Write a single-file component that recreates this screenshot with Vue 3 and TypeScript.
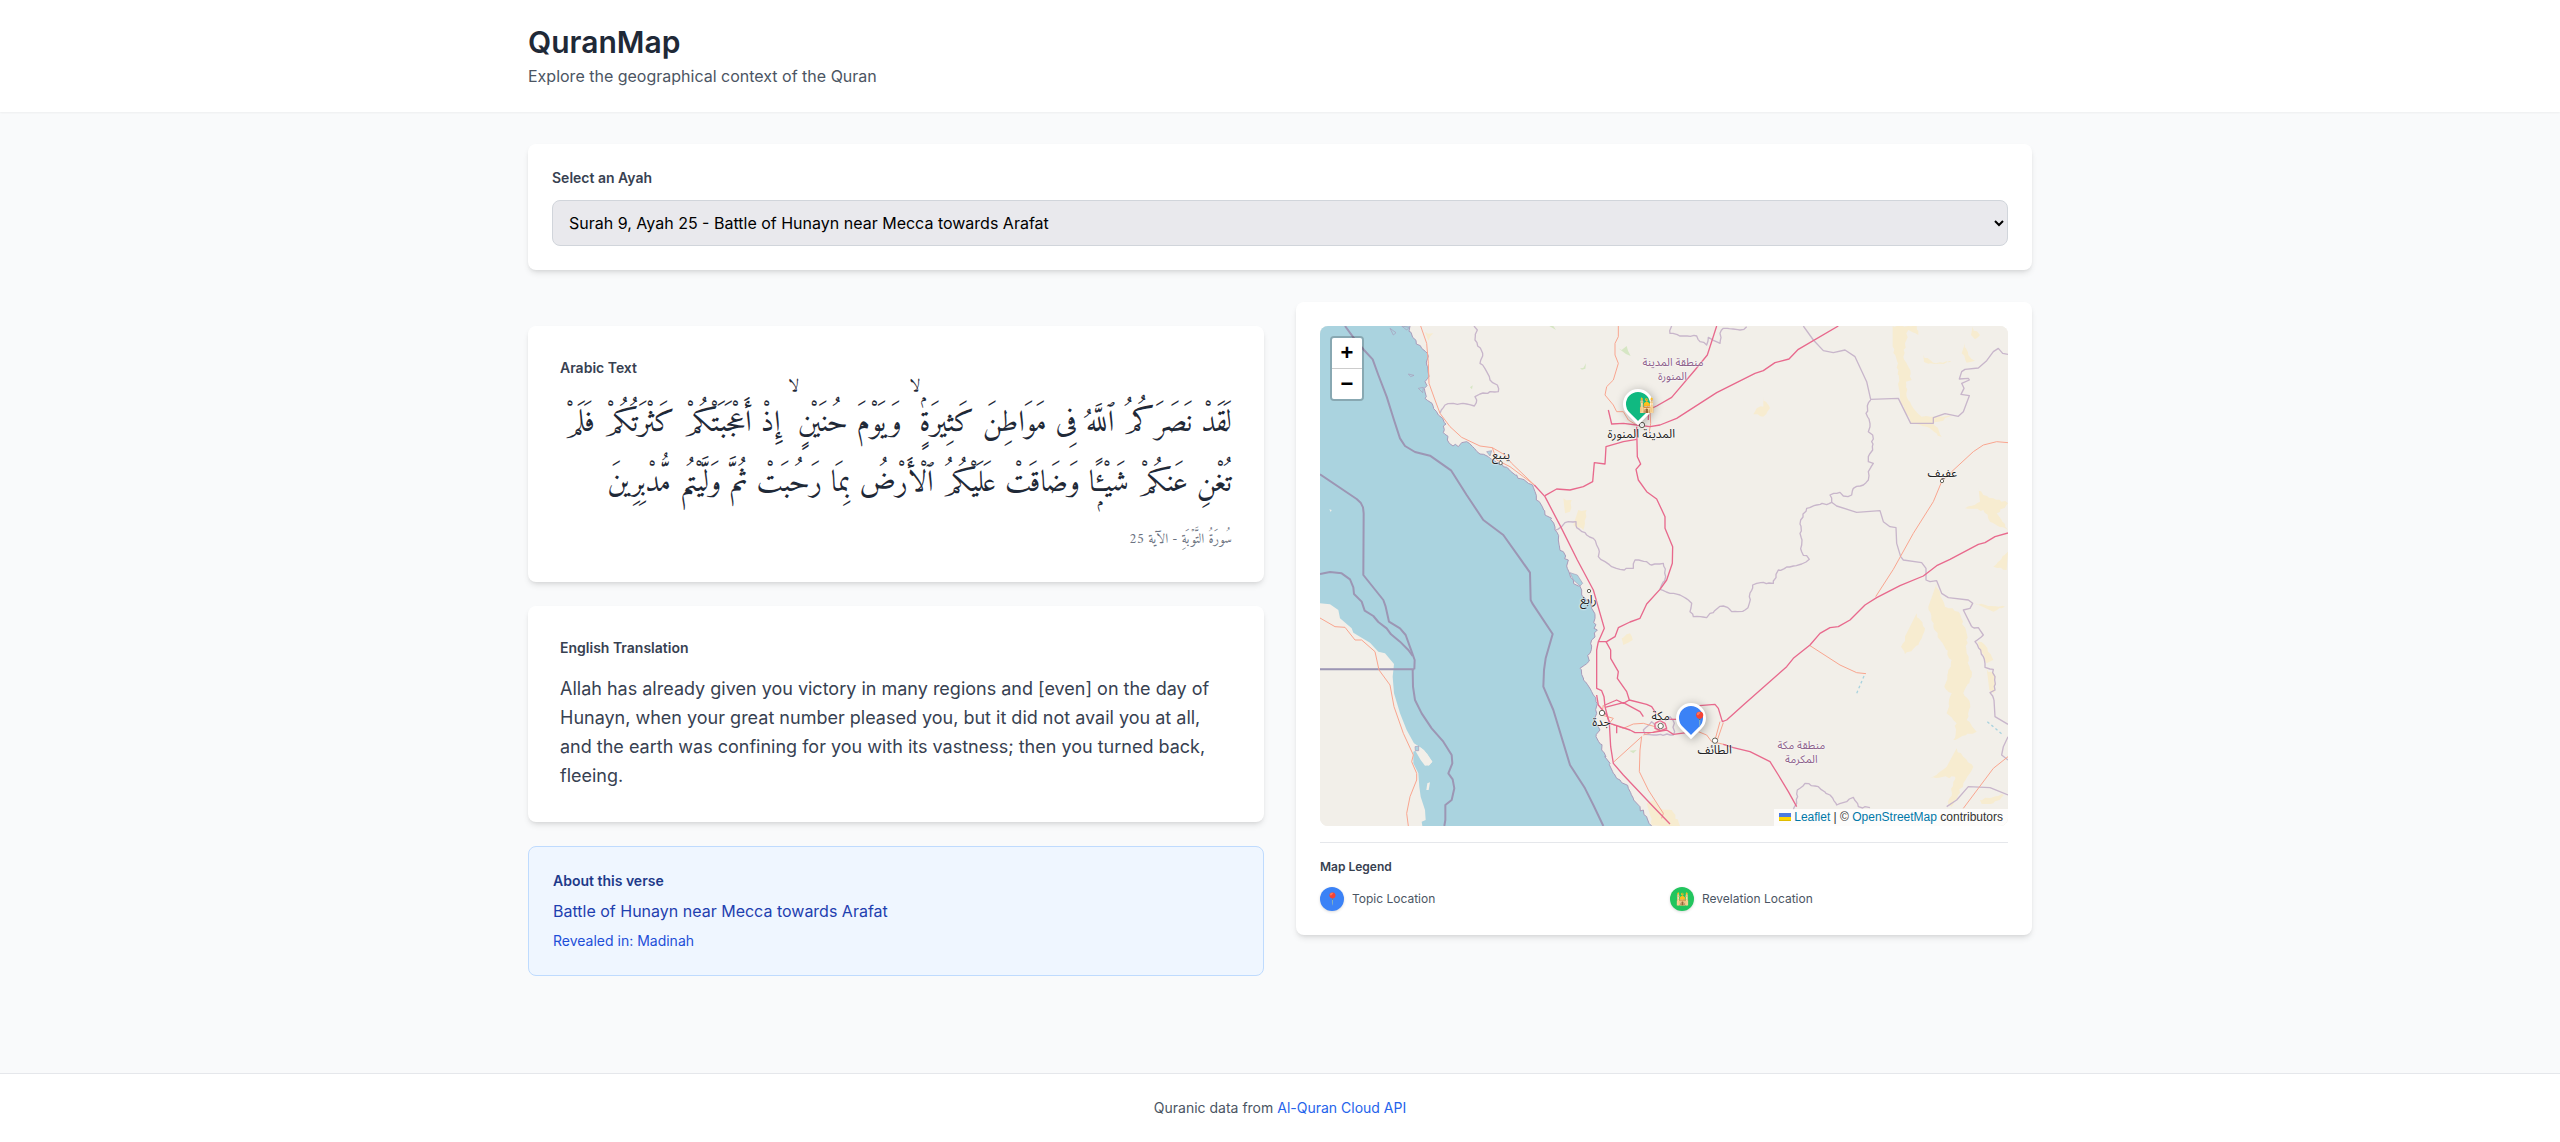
<script setup lang="ts">
import { ref } from 'vue'

type Kind = 'topic' | 'revelation'

interface Place {
  name: string
  x: number
  y: number
  region?: boolean
}

const ayahs = ['Surah 9, Ayah 25 - Battle of Hunayn near Mecca towards Arafat']
const selected = ref(ayahs[0])

/* The map drawing uses its own units: this window of them fills the map. */
const view = { x: 90, y: 78, w: 2064, h: 1500 }

const at = (x: number, y: number) => ({
  left: `${((x - view.x) / view.w) * 100}%`,
  top: `${((y - view.y) / view.h) * 100}%`,
})

/* Breaks every segment into short jittered steps, so coasts and borders look natural. */
function rough(points: string, amp: number): string {
  const pts = points.trim().split(/\s+/).map((p) => p.split(',').map(Number))
  let seed = 7
  const rnd = () => {
    seed = (seed * 16807) % 2147483647
    return seed / 2147483647 - 0.5
  }
  const out: string[] = []
  pts.forEach(([x, y], i) => {
    out.push(`${x},${y}`)
    const next = pts[i + 1]
    if (!next) return
    const [dx, dy] = [next[0] - x, next[1] - y]
    const n = Math.floor(Math.hypot(dx, dy) / 9)
    for (let k = 1; k < n; k++) {
      const t = k / n
      out.push(`${Math.round(x + dx * t + rnd() * amp)},${Math.round(y + dy * t + rnd() * amp)}`)
    }
  })
  return out.join(' ')
}

const eastCoast = rough(
  '360,78 368,112 395,145 412,160 410,195 413,235 403,265 405,295 430,320 445,345 468,372 460,398 478,430 505,440 515,428 530,425 548,440 570,462 600,475 640,500 680,525 715,550 735,575 748,605 765,645 785,655 795,690 805,720 820,755 835,780 832,805 850,840 875,870 890,900 905,925 915,955 912,985 922,990 905,1020 900,1060 885,1095 870,1105 880,1140 905,1175 918,1205 920,1240 915,1270 930,1290 918,1310 935,1350 960,1390 970,1420 990,1440 1015,1465 1030,1495 1050,1520 1070,1550 1085,1578',
  12,
)
const westCoast =
  '397,1578 395,1565 407,1560 405,1530 392,1490 388,1460 385,1420 370,1390 370,1355 376,1352 392,1380 405,1397 418,1396 427,1385 412,1362 395,1345 372,1330 350,1290 330,1240 312,1180 308,1130 312,1092 285,1060 265,1055 240,1028 190,998 185,985 150,955 145,930 120,913 90,910'
const sea = `${eastCoast} ${westCoast} 90,78`

const maritime = [
  '165,78 190,112 222,150 248,178 265,225 290,290 312,360 330,415 345,438 375,456 420,467 483,511 530,585 580,660 640,705 692,778 720,818 722,900 727,910 788,1002 767,1075 762,1110 760,1160 790,1230 840,1395 885,1465 910,1515 940,1578',
  '90,523 200,597 212,608 219,622 221,640 220,825 280,900 287,920 297,965 330,985 347,1005 365,1055 374,1080 373,1108',
  '90,822 120,816 155,820 180,838 190,862 192,882 215,905 224,932 250,948 265,966 290,985 303,1003 330,1025 355,1050 368,1068',
  '368,1108 369,1160 375,1200 395,1240 425,1285 460,1325 485,1365 487,1390 475,1420 488,1438 493,1465 485,1500 466,1515 466,1560 463,1578',
]

const borders = [
  '552,78 562,90 555,120 578,160 570,190 590,215 600,240 622,255 625,275 600,275 570,282 555,290 560,300 553,318 530,312 490,310 465,315 450,340',
  '797,690 815,680 825,668 858,665 860,683 890,705 910,715 928,755 925,770 945,785 965,800 990,808 1030,805 1035,780 1070,785 1085,795 1120,790 1127,830 1110,868 1140,880 1170,885 1195,900 1205,910 1200,935 1210,950 1250,953 1260,940 1300,918 1325,935 1365,930 1378,910 1388,855 1420,847 1450,850 1465,810 1510,798 1535,792 1558,778 1535,755 1535,735 1530,700 1532,660 1550,625 1580,615 1625,607 1620,585 1650,577 1660,588 1685,585 1690,565 1720,555 1735,540 1735,515 1750,490 1735,485 1735,470 1748,450 1748,405 1735,395 1740,380 1728,340 1742,300',
  '1145,78 1140,100 1180,108 1220,108 1230,125 1250,135 1255,112 1290,130 1290,100 1300,85 1350,90 1370,80',
  '1110,1290 1085,1265 1060,1290 1065,1303 1100,1305 1150,1305 1153,1270 1140,1250 1125,1262',
  '1510,1530 1520,1510 1522,1470 1545,1450 1575,1458 1620,1485 1640,1515 1670,1505 1690,1492 1705,1520 1740,1523',
  '2045,980 2065,983 2080,1005 2055,1025 2080,1070 2085,1102 2110,1108 2115,1170 2100,1178 2112,1200',
].map((p) => rough(p, 7))

const straightBorders = [
  '1540,78 1570,120 1600,152 1630,158 1665,150 1695,170 1730,245 1742,298 1825,295 1862,370 1930,370 1930,353 1965,341 2005,349 2020,335 2038,287 2013,283 2022,265 2015,250 2038,240 2035,235 2008,237 2015,215 2025,208 2065,204 2090,182 2110,155 2125,145 2138,160 2154,163',
  '1625,607 1640,618 1700,637 1770,632 1780,665 1800,680 1818,683 1820,730 1832,770 1840,780 1895,788 1908,805 1908,840 1920,845 1940,842 1955,880 1975,893 2035,900 2048,910 2040,925 2020,930 2045,980',
  '2112,1200 2115,1250 2154,1273',
  '2154,1310 2140,1340 2135,1365 2154,1380',
  '1970,1520 2000,1500 2035,1460 2100,1463 2154,1485',
  '90,1108 373,1108',
]

const motorways = [
  '1645,78 1525,148 1497,177 1455,188 1420,212 1395,220 1280,278 1160,355 1110,375 1080,380 1040,375 1000,370 965,372 955,330',
  '1280,78 1252,165 1215,210 1145,292 1100,318 1075,330 1075,360',
  '765,587 800,567 840,570 880,560 908,545 913,488 945,492 948,440 1000,425 1040,418',
  '1040,380 1042,470 1052,492 1038,508 1045,540 1070,575 1100,597 1125,650 1125,685 1148,740 1147,790 1130,840 1110,868 1070,912 1050,955 1020,966 985,983 975,1010 950,1025 925,1025',
  '733,555 765,590 812,680 862,780 910,870 943,985 925,1025 920,1050 920,1165 935,1172 942,1190 945,1220 958,1270 962,1340 970,1390 1000,1425 1090,1520 1140,1572',
  '948,1025 962,1050 962,1075 985,1115 982,1135 1010,1175 1018,1200',
  '945,1215 980,1200 1000,1210 1018,1200 1070,1213 1085,1220 1098,1240',
  '945,1222 1000,1208 1050,1235 1060,1250',
  '920,1185 925,1215 950,1245 960,1270 1020,1290 1035,1298 1090,1297 1130,1290 1150,1303 1190,1298',
  '980,1278 980,1300',
  '1095,1270 1110,1262 1125,1270 1130,1285 1112,1292 1095,1285 1095,1270',
  '1135,1258 1160,1258',
  '1228,1217 1275,1213 1285,1225 1297,1265 1310,1260 1360,1215 1490,1100 1510,1075 1560,1035 1590,1000 1620,983 1645,980 1680,960 1725,915 1760,893 1830,857 1900,828 1940,797 1980,778 2065,733 2085,728 2115,710 2154,699',
  '1300,1333 1330,1343 1380,1355 1440,1385 1465,1425 1495,1475 1520,1520',
]

const trunks = [
  '392,78 410,130 415,190 417,250 435,300 450,340 480,380 515,412 570,438 607,443 645,465 665,490 733,555',
  '607,443 620,480 660,500 700,530 733,555',
  '985,78 985,110 975,130 975,165 985,190 970,240 950,260 945,285 970,315 980,335 1000,335 1015,360 1040,375',
  '1080,330 1082,370 1078,395',
  '2154,428 2120,425 2080,435 2050,455 1985,515 1955,545 1930,605 1870,700 1810,808 1757,890',
  '1560,1037 1650,1095 1700,1118 1728,1121',
  '90,954 135,980 165,982 195,1020 215,1020 255,1055 267,1110 300,1155 312,1220 340,1300 370,1365 365,1385 380,1420 380,1440 360,1490 350,1540 355,1578',
  '970,1387 1055,1310 1050,1350 1048,1415 1075,1470 1120,1540 1115,1555',
  '940,1215 935,1245 970,1255 958,1270 1000,1285 1030,1272 1060,1270 1095,1280',
  '1060,1305 1110,1290',
  '1225,1295 1250,1305 1265,1325 1310,1335',
  '1290,1265 1275,1320',
  '1300,1268 1282,1320',
  '2154,1370 2110,1405 2020,1525',
]

const sands = [
  '1808,78 1880,78 1885,105 1855,90 1845,130 1840,170 1855,200 1865,240 1848,245 1850,290 1870,325 1895,350 1930,350 1985,348 1930,370 1955,410 1920,385 1862,370 1830,290 1825,210 1808,140',
  '2048,80 2070,105 2055,118 2043,105',
  '2025,130 2035,165 2055,182 2030,188 2015,160',
  '1900,165 1930,188 1985,185 1940,192 1902,186',
  '1420,290 1440,325 1420,350 1390,343 1400,325 1420,320',
  '2065,560 2080,585 2154,610 2120,640 2154,690 2100,665 2080,630 2025,625 2070,605',
  '1940,850 1955,895 1965,920 2005,935 2030,1000 2030,1060 2045,1130 2020,1180 2040,1210 2030,1260 2060,1295 1990,1320 2000,1270 1970,1240 1985,1180 1965,1165 1985,1080 1950,1020 1930,980 1915,920',
  '1880,940 1905,985 1885,1035 1845,1062 1833,1040 1850,1000',
  '2060,1015 2085,1035 2110,1080 2090,1090 2070,1050',
  '2090,1105 2115,1125 2112,1180 2098,1170',
  '2000,1345 2020,1370 2050,1400 2020,1450 1985,1520 1975,1515 1995,1430 1920,1435 1970,1400',
  '2055,910 2105,918 2145,920 2110,935',
  '2070,1500 2150,1480 2110,1510 2075,1512',
  '2154,755 2110,800 2150,810',
  '820,595 845,600 840,635 825,640',
  '865,630 890,630 880,690 850,675',
  '405,95 430,100 415,122',
  '995,1015 1020,1000 1028,1020 1000,1035',
  '1070,1510 1090,1500 1110,1525 1145,1530 1170,1578 1085,1578 1080,1545',
].map((p) => rough(p, 8))

const greens = [
  '985,145 995,150 1010,138 1014,152 1022,168 1008,162',
  '870,205 880,204 888,190 886,206 876,209',
  '778,78 798,90 790,78',
  '1018,1352 1040,1350 1030,1360',
  '540,262 548,256 546,268',
]
const islands = ['372,1350 380,1335 402,1350 427,1385 415,1397 400,1385 398,1365', '412,1450 420,1447 416,1470 409,1470', '118,628 125,630 122,636']
const lagoons = ['300,85 318,98 310,105', '355,222 372,226 362,230', '385,265 400,262 398,278', '590,455 605,452 600,468', '840,818 862,825 878,850 870,858 850,840', '375,1340 386,1338 386,1352 376,1352', '335,78 358,82 350,90']

const cities = [
  { x: 632, y: 489, r: 5 },
  { x: 897, y: 873, r: 5 },
  { x: 936, y: 1239, r: 8 },
  { x: 1112, y: 1278, r: 8 },
  { x: 1275, y: 1322, r: 8 },
  { x: 1956, y: 543, r: 5 },
  { x: 1056, y: 375, r: 8 },
]

const places: Place[] = [
  { name: 'المدينة المنورة', x: 1054, y: 405 },
  { name: 'منطقة المدينة', x: 1149, y: 190, region: true },
  { name: 'المنورة', x: 1147, y: 232, region: true },
  { name: 'ينبع', x: 633, y: 468 },
  { name: 'رابغ', x: 895, y: 904 },
  { name: 'جدة', x: 934, y: 1268 },
  { name: 'مكة', x: 1112, y: 1251 },
  { name: 'الطائف', x: 1274, y: 1354 },
  { name: 'عفيف', x: 1957, y: 523 },
  { name: 'منطقة مكة', x: 1534, y: 1339, region: true },
  { name: 'المكرمة', x: 1534, y: 1381, region: true },
]

const markers: { kind: Kind; glyph: string; x: number; y: number }[] = [
  { kind: 'revelation', glyph: '🕌', x: 1044, y: 312 },
  { kind: 'topic', glyph: '📍', x: 1203, y: 1254 },
]

const legend: { kind: Kind; glyph: string; label: string }[] = [
  { kind: 'topic', glyph: '📍', label: 'Topic Location' },
  { kind: 'revelation', glyph: '🕌', label: 'Revelation Location' },
]
</script>

<template>
  <div class="page">
    <header class="top">
      <div class="wrap">
        <h1>QuranMap</h1>
        <p>Explore the geographical context of the Quran</p>
      </div>
    </header>

    <main class="wrap main">
      <section class="card picker">
        <label class="caption" for="ayah">Select an Ayah</label>
        <select id="ayah" v-model="selected">
          <option v-for="a in ayahs" :key="a" :value="a">{{ a }}</option>
        </select>
      </section>

      <div class="columns">
        <div class="verses">
          <section class="card roomy">
            <h2 class="caption">Arabic Text</h2>
            <p class="arabic" dir="rtl" lang="ar">لَقَدْ نَصَرَكُمُ ٱللَّهُ فِى مَوَاطِنَ كَثِيرَةٍۢ ۙ وَيَوْمَ حُنَيْنٍ ۙ إِذْ أَعْجَبَتْكُمْ كَثْرَتُكُمْ فَلَمْ تُغْنِ عَنكُمْ شَيْـًۭٔا وَضَاقَتْ عَلَيْكُمُ ٱلْأَرْضُ بِمَا رَحُبَتْ ثُمَّ وَلَّيْتُم مُّدْبِرِينَ</p>
            <p class="source" dir="rtl" lang="ar">سُورَةُ التَّوۡبَةِ - الآية 25</p>
          </section>

          <section class="card roomy">
            <h2 class="caption">English Translation</h2>
            <p class="english">Allah has already given you victory in many regions and [even] on the day of Hunayn, when your great number pleased you, but it did not avail you at all, and the earth was confining for you with its vastness; then you turned back, fleeing.</p>
          </section>

          <section class="about">
            <h2 class="caption">About this verse</h2>
            <p>Battle of Hunayn near Mecca towards Arafat</p>
            <p class="revealed">Revealed in: Madinah</p>
          </section>
        </div>

        <section class="card mapcard">
          <div class="map">
            <svg class="terrain" :viewBox="`${view.x} ${view.y} ${view.w} ${view.h}`" preserveAspectRatio="none" aria-hidden="true">
              <rect :x="view.x" :y="view.y" :width="view.w" :height="view.h" fill="#f2efe9" />
              <polygon v-for="(p, i) in sands" :key="'s' + i" :points="p" fill="#f7ecd0" />
              <polygon v-for="(p, i) in greens" :key="'g' + i" :points="p" fill="#d6e6c4" />
              <polygon :points="sea" fill="#aad3df" />
              <polyline :points="eastCoast" class="line coast" />
              <polygon v-for="(p, i) in islands" :key="'i' + i" :points="p" fill="#f2efe9" />
              <polygon v-for="(p, i) in lagoons" :key="'l' + i" :points="p" fill="#aad3df" stroke="#a99bba" stroke-width="2" />
              <polyline v-for="(p, i) in borders" :key="'b' + i" :points="p" class="line border" />
              <polyline v-for="(p, i) in straightBorders" :key="'c' + i" :points="p" class="line border" />
              <polyline v-for="(p, i) in maritime" :key="'m' + i" :points="p" class="line maritime" />
              <polyline points="90,1108 373,1108" class="line maritime" />
              <polyline v-for="(p, i) in trunks" :key="'t' + i" :points="p" class="line trunk" />
              <polyline v-for="(p, i) in motorways" :key="'w' + i" :points="p" class="line motorway" />
              <path d="M1722 1128 1698 1185M2092 1265 2140 1306" class="line wadi" />
              <circle v-for="(c, i) in cities" :key="'d' + i" :cx="c.x" :cy="c.y" :r="c.r" fill="#fff" stroke="#66665c" stroke-width="3" />
            </svg>
            <span v-for="p in places" :key="p.name" class="place" :class="{ region: p.region }" :style="at(p.x, p.y)" lang="ar" dir="rtl">{{ p.name }}</span>
            <div v-for="m in markers" :key="m.kind" class="marker" :style="at(m.x, m.y)">
              <div class="drop" :class="m.kind"></div>
              <span class="glyph">{{ m.glyph }}</span>
            </div>
            <div class="zoom">
              <button type="button" aria-label="Zoom in">+</button>
              <button type="button" aria-label="Zoom out">−</button>
            </div>
            <div class="credit">
              <a href="#leaflet"><svg class="flag" viewBox="0 0 12 8" aria-hidden="true"><path fill="#4C7BE1" d="M0 0h12v4H0z" /><path fill="#FFD500" d="M0 4h12v3H0z" /><path fill="#E0BC00" d="M0 7h12v1H0z" /></svg> Leaflet</a>
              | © <a href="#osm">OpenStreetMap</a> contributors
            </div>
          </div>

          <div class="legend">
            <h3>Map Legend</h3>
            <ul>
              <li v-for="l in legend" :key="l.kind">
                <span class="badge" :class="l.kind">{{ l.glyph }}</span>{{ l.label }}
              </li>
            </ul>
          </div>
        </section>
      </div>
    </main>

    <footer>
      <p>Quranic data from <a href="#api">Al-Quran Cloud API</a></p>
    </footer>
  </div>
</template>

<style>
body {
  margin: 0;
}
</style>

<style scoped>
.page {
  display: flex;
  flex-direction: column;
  min-height: 100vh;
  background: #f9fafb;
  color: #1f2937;
  font: 16px/24px Inter, 'Noto Sans', sans-serif;
}
.page * {
  box-sizing: border-box;
}
h1, h2, h3, p, ul {
  margin: 0;
  padding: 0;
}
a {
  text-decoration: none;
}
.wrap {
  width: 100%;
  max-width: 1536px;
  margin: 0 auto;
  padding: 0 16px;
}
.top {
  padding: 24px 0;
  background: #fff;
  box-shadow: 0 1px 2px rgba(0, 0, 0, 0.05);
}
.top h1 {
  font-size: 30px;
  line-height: 36px;
  font-weight: 600;
}
.top p {
  margin-top: 4px;
  color: #4b5563;
}
.main {
  flex: 1;
  padding-top: 32px;
  padding-bottom: 96px;
}
.card {
  padding: 24px;
  border-radius: 8px;
  background: #fff;
  box-shadow: 0 4px 6px -1px rgba(0, 0, 0, 0.1), 0 2px 4px -2px rgba(0, 0, 0, 0.1);
}
.caption {
  display: block;
  font-size: 14px;
  line-height: 20px;
  font-weight: 600;
  color: #374151;
}
.picker select {
  display: block;
  width: 100%;
  height: 46px;
  margin-top: 12px;
  padding: 0 12px;
  border: 1px solid #d1d5db;
  border-radius: 8px;
  background-color: #e9e9ed;
  color: #000;
  font: inherit;
}
.columns {
  display: grid;
  grid-template-columns: 1fr 1fr;
  align-items: start;
  gap: 32px;
  margin-top: 32px;
}
.verses {
  display: flex;
  flex-direction: column;
  gap: 24px;
  padding-top: 24px;
}
.roomy {
  padding: 32px;
}
.arabic {
  margin-top: 16px;
  font-family: Amiri, 'Scheherazade New', 'Noto Naskh Arabic', serif;
  font-size: 30px;
  line-height: 60px;
}
.source {
  margin-top: 16px;
  font-family: Amiri, 'Scheherazade New', 'Noto Naskh Arabic', serif;
  font-size: 14px;
  line-height: 20px;
  color: #6b7280;
}
.english {
  margin-top: 16px;
  font-size: 18px;
  line-height: 29px;
  color: #374151;
}
.about {
  padding: 24px;
  border: 1px solid #bfdbfe;
  border-radius: 8px;
  background: #eff6ff;
  color: #1e40af;
}
.about .caption {
  color: #1e3a8a;
}
.about p {
  margin-top: 8px;
}
.about .revealed {
  font-size: 14px;
  line-height: 20px;
  color: #1d4ed8;
}
.map {
  position: relative;
  height: 500px;
  overflow: hidden;
  border-radius: 8px;
  background: #f2efe9;
}
.terrain {
  display: block;
  width: 100%;
  height: 100%;
}
.line {
  fill: none;
  stroke-width: 4;
  stroke-linejoin: round;
}
.coast {
  stroke: #a99bba;
  stroke-width: 3;
}
.border {
  stroke: #c8b6cb;
}
.maritime {
  stroke: #9c96b4;
  stroke-width: 6;
}
.trunk {
  stroke: #f9a58f;
  stroke-width: 3;
}
.motorway {
  stroke: #e8698d;
}
.wadi {
  stroke: #aad3df;
  stroke-dasharray: 8 8;
}
.place {
  position: absolute;
  transform: translate(-50%, -50%);
  white-space: nowrap;
  font: 12px/16px 'Noto Sans Arabic', 'DejaVu Sans', sans-serif;
  color: #222;
  text-shadow: 0 0 2px #fff, 0 0 2px #fff;
}
.region {
  font-size: 11px;
  line-height: 12px;
  color: #8d618b;
}
.marker {
  position: absolute;
  width: 30px;
  height: 30px;
  transform: translate(-50%, -50%);
}
.drop {
  width: 30px;
  height: 30px;
  border: 3px solid #fff;
  border-radius: 50% 50% 50% 0;
  box-shadow: 0 2px 10px rgba(0, 0, 0, 0.3);
  transform: rotate(-45deg);
}
.drop.topic {
  background: #3b82f6;
}
.drop.revelation {
  background: #10b981;
}
.glyph {
  position: absolute;
  top: 8px;
  left: 15px;
  font-size: 14px;
  line-height: 16px;
}
.zoom {
  position: absolute;
  top: 10px;
  left: 10px;
  border: 2px solid rgba(0, 0, 0, 0.2);
  border-radius: 4px;
  background-clip: padding-box;
}
.zoom button {
  display: block;
  width: 30px;
  height: 30px;
  padding: 0;
  border: 0;
  border-radius: 0 0 2px 2px;
  background: #fff;
  color: #000;
  font: bold 22px/30px 'Liberation Sans', Arial, sans-serif;
}
.zoom button:first-child {
  height: 31px;
  border-bottom: 1px solid #ccc;
  border-radius: 2px 2px 0 0;
}
.credit {
  position: absolute;
  right: 0;
  bottom: 0;
  padding: 0 5px;
  background: rgba(255, 255, 255, 0.8);
  color: #333;
  font: 12px/17px 'Liberation Sans', Arial, sans-serif;
}
.credit a {
  color: #0078a8;
}
.flag {
  width: 12px;
  height: 8px;
}
.legend {
  margin-top: 16px;
  padding-top: 16px;
  border-top: 1px solid #e5e7eb;
  font-size: 12px;
  line-height: 16px;
}
.legend h3 {
  font-size: 12px;
  font-weight: 600;
  color: #374151;
}
.legend ul {
  display: grid;
  grid-template-columns: 1fr 1fr;
  gap: 12px;
  margin-top: 12px;
  list-style: none;
}
.legend li {
  display: flex;
  align-items: center;
  gap: 8px;
  color: #4b5563;
}
.badge {
  display: flex;
  align-items: center;
  justify-content: center;
  width: 24px;
  height: 24px;
  border-radius: 50%;
  box-shadow: 0 1px 3px rgba(0, 0, 0, 0.15);
}
.badge.topic {
  background: #3b82f6;
}
.badge.revelation {
  background: #22c55e;
}
footer {
  padding: 24px 16px;
  border-top: 1px solid #e5e7eb;
  background: #fff;
  text-align: center;
  font-size: 14px;
  line-height: 20px;
  color: #4b5563;
}
footer a {
  color: #2563eb;
}
</style>
